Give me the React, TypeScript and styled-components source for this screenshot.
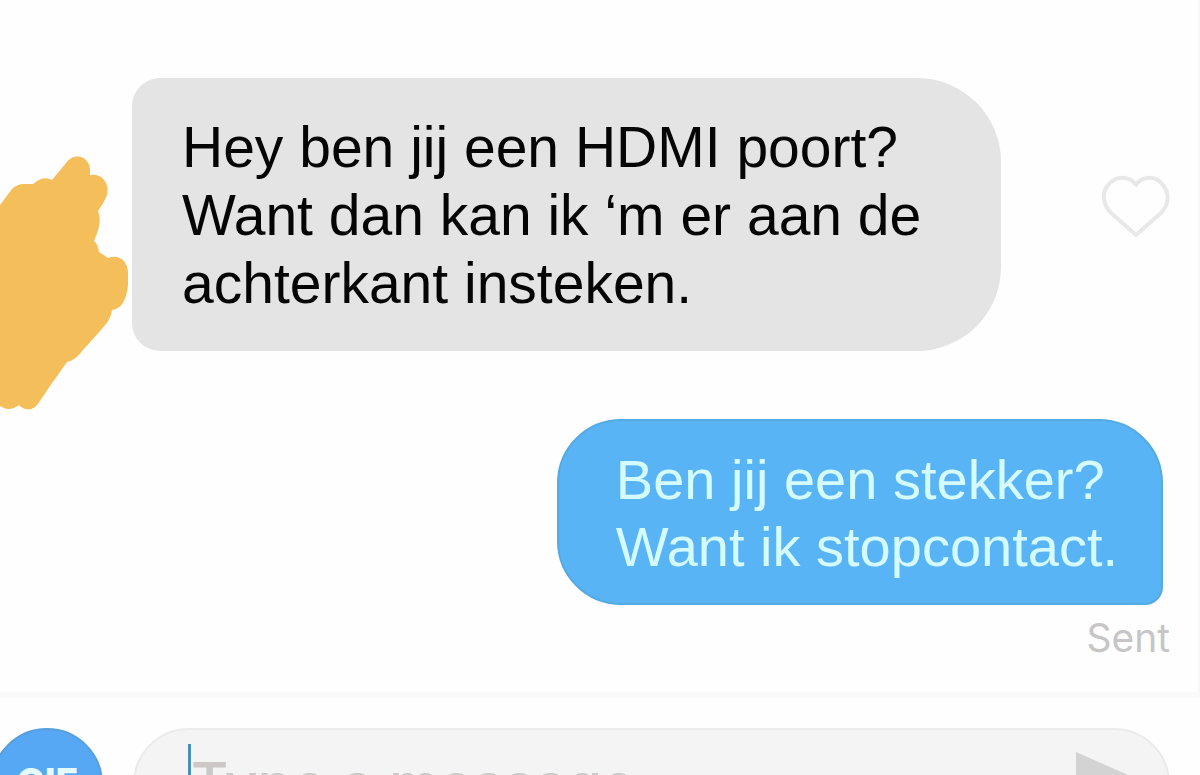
import React from "react";
import styled, { createGlobalStyle } from "styled-components";

const GlobalStyle = createGlobalStyle`
  *, *::before, *::after { box-sizing: border-box; }
  body {
    margin: 0;
    overflow: hidden;
    background: #fefefe;
    font-family: "Liberation Sans", Arial, Helvetica, sans-serif;
  }
`;

const Page = styled.div`
  height: 100vh;
  overflow: hidden;
  display: flex;
  flex-direction: column;
`;

const Thread = styled.main`
  flex: none;
  display: flex;
  flex-direction: column;
  gap: 4px;
  padding: 78px 0 32px;
  border-right: 2px solid #f8f8f8;
`;

const ReceivedRow = styled.article`
  display: flex;
  align-items: flex-start;
`;

const Avatar = styled.svg`
  flex: none;
  width: 132px;
  height: 260px;
  margin-top: 77px;
`;

const SentRow = styled.article`
  display: flex;
  flex-direction: column;
  align-items: flex-end;
  gap: 11px;
  padding-right: 28px;
`;

const Bubble = styled.p<{ $sent?: boolean }>`
  margin: 0 ${(p) => (p.$sent ? 7 : 0)}px 0 0;
  white-space: nowrap;
  color: ${(p) => (p.$sent ? "#d4fbff" : "#050505")};
  background: ${(p) => (p.$sent ? "#59b4f5" : "#e4e4e4")};
  border: ${(p) => (p.$sent ? "2px solid #55aae2" : "0")};
  border-radius: ${(p) => (p.$sent ? "64px 64px 18px 64px" : "28px 84px 84px 28px")};
  padding: ${(p) => (p.$sent ? "25px 43px 23px 57px" : "35px 80px 34px 50px")};
  font-size: ${(p) => (p.$sent ? 56 : 57)}px;
  line-height: ${(p) => (p.$sent ? 67 : 68)}px;
`;

const LikeButton = styled.button`
  margin: 97px 28px 0 auto;
  padding: 0;
  border: 0;
  background: none;
  display: flex;

  svg {
    width: 69px;
    height: 64px;
  }
`;

const Status = styled.span`
  font-family: Inter, sans-serif;
  font-size: 39px;
  line-height: 44px;
  color: #c6c6c6;
`;

const Composer = styled.form`
  flex: none;
  display: flex;
  gap: 30px;
  padding: 30px 30px 30px 0;
  border-top: 6px solid #fafafa;
`;

const GifButton = styled.button`
  flex: none;
  width: 112px;
  height: 112px;
  margin-left: -9px;
  padding: 0 0 4px;
  border: 2px solid #569fdc;
  border-radius: 50%;
  background: #56a8f5;
  color: #e6fbff;
  font: 800 38px/40px Inter, sans-serif;
`;

const Field = styled.label`
  flex: 1;
  min-width: 0;
  display: flex;
  align-items: flex-start;
  height: 112px;
  padding: 14px 24px 14px 53px;
  border: 2px solid #ebebeb;
  border-radius: 56px;
  background: #f4f4f4;
`;

const Caret = styled.span`
  flex: none;
  width: 3px;
  height: 80px;
  background: #4a90b8;
`;

const MessageInput = styled.input`
  flex: 1;
  min-width: 0;
  height: 80px;
  padding: 0;
  border: 0;
  outline: 0;
  background: none;
  color: #333;
  font: 500 57px/80px Inter, sans-serif;

  &::placeholder {
    color: #cbc8c7;
    opacity: 1;
  }
`;

const SendButton = styled.button`
  flex: none;
  margin-top: 8px;
  padding: 0;
  border: 0;
  background: none;

  svg {
    display: block;
    width: 68px;
    height: 60px;
  }
`;

export default function App() {
  return (
    <Page>
      <GlobalStyle />
      <Thread>
        <ReceivedRow>
          <Avatar viewBox="0 0 132 260" aria-hidden="true">
            <path
              fill="#f4bf5b"
              d="M0 50 L12 34 Q17 29 24 29 L33 29 Q43 20 52 25 L66 8 C74 -3 88 1 90 13 L90 20 C102 18 110 28 107 40 Q105 46 98 56 C102 66 98 77 94 86 Q98 89 99 97 L108 103 C119 99 128 106 128 118 L128 130 Q126 153 112 155 C111 164 106 169 101 175 L83 195 Q76 205 67 207 L50 231 L40 246 C34 257 24 256 19 250 C12 256 4 254 0 251 Z"
            />
          </Avatar>
          <Bubble>
            Hey ben jij een HDMI poort?
            <br />
            Want dan kan ik ‘m er aan de
            <br />
            achterkant insteken.
          </Bubble>
          <LikeButton type="button" aria-label="Like message">
            <svg viewBox="0 0 69 64" fill="none" stroke="#e8e8e8" strokeWidth="4" strokeLinejoin="round">
              <path d="M35 60 L10 38 C2 30 0 17 8 9 C16 0 29 1 35 10 C41 1 54 0 61 9 C69 17 68 30 60 38 Z" />
            </svg>
          </LikeButton>
        </ReceivedRow>
        <SentRow>
          <Bubble $sent>
            Ben jij een stekker?
            <br />
            Want ik stopcontact.
          </Bubble>
          <Status>Sent</Status>
        </SentRow>
      </Thread>
      <Composer onSubmit={(e) => e.preventDefault()}>
        <GifButton type="button">GIF</GifButton>
        <Field>
          <Caret />
          <MessageInput type="text" placeholder="Type a message" aria-label="Type a message" />
          <SendButton type="submit" aria-label="Send">
            <svg viewBox="0 0 68 60">
              <path fill="#d3d3d3" d="M0 0 L68 30 L0 60 Z" />
            </svg>
          </SendButton>
        </Field>
      </Composer>
    </Page>
  );
}
